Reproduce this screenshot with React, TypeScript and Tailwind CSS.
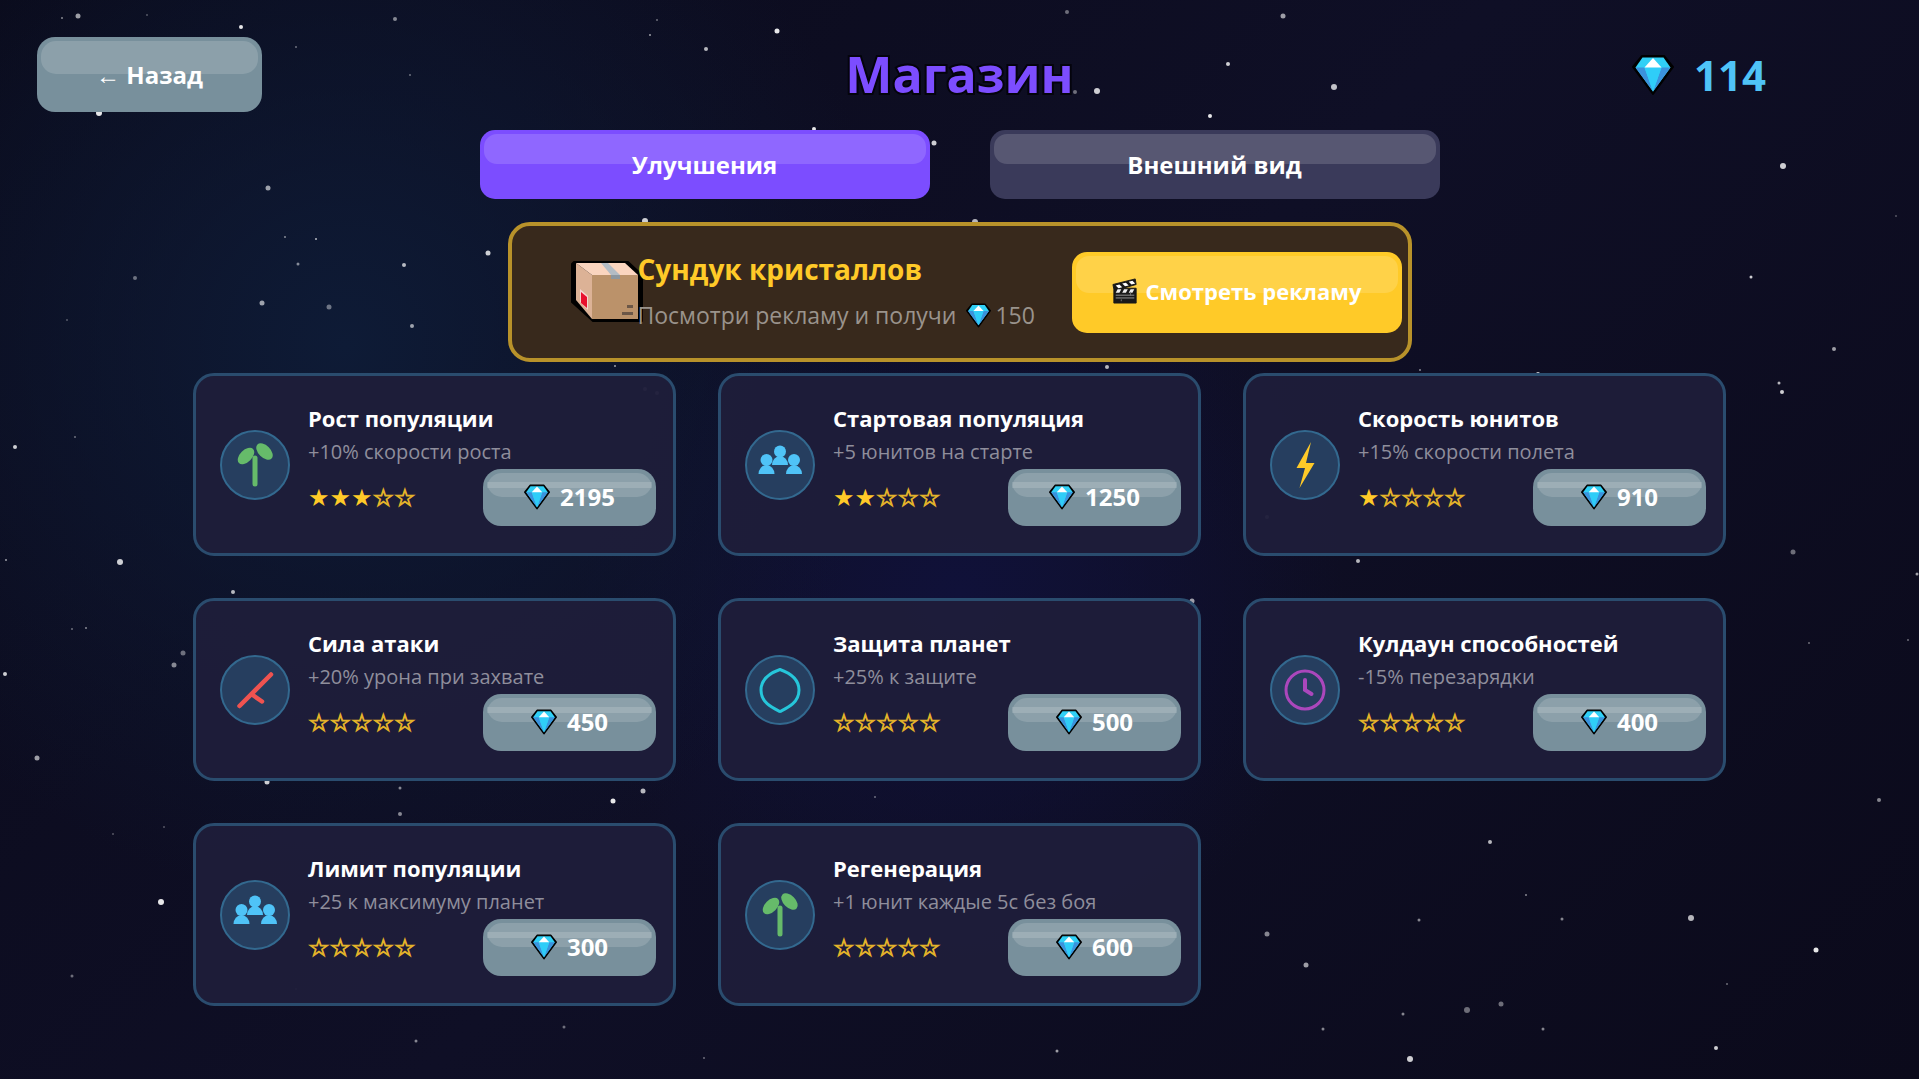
import { useState } from 'react';
import type { ReactNode } from 'react';
import clsx from 'clsx';

type IconName = 'sprout' | 'people' | 'bolt' | 'sword' | 'shield' | 'clock';

interface Upgrade {
  id: string;
  icon: IconName;
  title: string;
  description: string;
  level: number;
  price: number;
}

const MAX_LEVEL = 5;

const upgrades: Upgrade[] = [
  { id: 'growth', icon: 'sprout', title: 'Рост популяции', description: '+10% скорости роста', level: 3, price: 2195 },
  { id: 'start', icon: 'people', title: 'Стартовая популяция', description: '+5 юнитов на старте', level: 2, price: 1250 },
  { id: 'speed', icon: 'bolt', title: 'Скорость юнитов', description: '+15% скорости полета', level: 1, price: 910 },
  { id: 'attack', icon: 'sword', title: 'Сила атаки', description: '+20% урона при захвате', level: 0, price: 450 },
  { id: 'defense', icon: 'shield', title: 'Защита планет', description: '+25% к защите', level: 0, price: 500 },
  { id: 'cooldown', icon: 'clock', title: 'Кулдаун способностей', description: '-15% перезарядки', level: 0, price: 400 },
  { id: 'limit', icon: 'people', title: 'Лимит популяции', description: '+25 к максимуму планет', level: 0, price: 300 },
  { id: 'regen', icon: 'sprout', title: 'Регенерация', description: '+1 юнит каждые 5с без боя', level: 0, price: 600 },
];

const tabs = [
  { id: 'upgrades', label: 'Улучшения' },
  { id: 'skins', label: 'Внешний вид' },
];

// x, y, radius, opacity
const stars: [number, number, number, number][] = [
  [62, 18, 1, 0.5], [78, 16, 2.5, 0.6], [147, 15, 1, 0.3], [241, 27, 2, 0.9], [395, 19, 2, 0.5],
  [296, 47, 1, 0.4], [410, 75, 1, 0.4], [268, 188, 2.5, 0.6], [285, 237, 1, 0.5], [316, 239, 1, 0.7],
  [298, 264, 1.5, 0.5], [404, 265, 2, 0.7], [99, 113, 3, 0.9], [1283, 16, 2.5, 0.6], [1334, 87, 3, 0.75],
  [1228, 64, 2, 0.8], [1210, 116, 2, 0.9], [1097, 91, 3, 0.8], [1075, 92, 2, 0.4], [1107, 367, 2, 0.7],
  [777, 31, 2.5, 0.9], [706, 49, 2, 0.7], [650, 35, 1, 0.6], [657, 20, 1, 0.4], [814, 129, 2, 0.9],
  [934, 143, 2.5, 0.8], [645, 221, 3, 0.8], [975, 222, 3, 0.7], [488, 253, 2.5, 0.8], [615, 366, 1, 0.6],
  [1783, 166, 3, 0.8], [1896, 216, 1, 0.3], [1751, 277, 1.5, 0.8], [1067, 12, 2, 0.4], [1834, 349, 2, 0.6],
  [1779, 383, 1.5, 0.7], [1782, 392, 2, 0.8], [1793, 552, 2.5, 0.4], [1538, 374, 2, 0.8], [1358, 561, 2, 0.7],
  [15, 447, 2, 0.8], [120, 562, 3, 0.8], [6, 560, 1, 0.6], [233, 592, 2, 0.7], [75, 437, 1, 0.4],
  [72, 629, 1, 0.4], [86, 628, 1, 0.5], [174, 665, 2.5, 0.5], [183, 653, 2.5, 0.4], [5, 674, 2, 0.8],
  [37, 758, 2.5, 0.6], [267, 782, 2.5, 0.8], [400, 788, 1.5, 0.5], [400, 814, 2, 0.5], [613, 801, 2.5, 0.9],
  [643, 791, 2.5, 0.7], [161, 902, 3, 0.9], [113, 834, 1, 0.3], [164, 827, 1, 0.3], [72, 976, 1.5, 0.4],
  [416, 1041, 1.5, 0.5], [564, 1027, 1.5, 0.4], [704, 1058, 1, 0.4], [296, 989, 1, 0.3], [1057, 1051, 1.5, 0.6],
  [1267, 934, 2.5, 0.5], [1306, 965, 2.5, 0.6], [1410, 1059, 3, 0.8], [1403, 1014, 1.5, 0.5], [1467, 1010, 3, 0.4],
  [1501, 1004, 2.5, 0.4], [1490, 842, 2, 0.7], [1562, 919, 1.5, 0.5], [1419, 920, 1.5, 0.5], [1691, 918, 3, 0.7],
  [1816, 950, 2.5, 0.9], [1716, 1048, 2, 0.8], [1879, 800, 2, 0.5], [1526, 895, 1, 0.5], [1917, 574, 1.5, 0.6],
  [412, 326, 2, 0.6], [135, 278, 2, 0.4], [262, 303, 2.5, 0.6], [329, 307, 2.5, 0.4], [67, 320, 1, 0.3],
  [1727, 984, 1, 0.4], [645, 389, 2, 0.5], [657, 393, 2, 0.5], [1192, 601, 2.5, 0.6], [1267, 517, 2, 0.5],
  [1323, 1029, 1.5, 0.5], [1543, 1029, 1.5, 0.5], [1809, 643, 1, 0.4], [1908, 640, 1, 0.4], [875, 797, 1, 0.4],
  [1420, 370, 1, 0.5],
];

function Starfield() {
  return (
    <svg
      className="pointer-events-none absolute inset-0 -z-10 h-full w-full"
      viewBox="0 0 1919 1079"
      preserveAspectRatio="xMidYMid slice"
      aria-hidden="true"
    >
      {stars.map(([x, y, r, opacity]) => (
        <circle key={`${x}-${y}`} cx={x} cy={y} r={r} fill="#fff" opacity={opacity} />
      ))}
    </svg>
  );
}

function Gem({ className }: { className?: string }) {
  return (
    <svg viewBox="0 0 42 42" className={clsx('shrink-0', className)} aria-hidden="true">
      <path d="M10 2h22l9 11-20 27L1 13z" fill="#000" stroke="#000" strokeWidth="2" strokeLinejoin="round" />
      <path d="M10.500 3.500h21l7 10-17.500 24L3.500 13.500z" fill="#30d0f6" />
      <path d="M3.500 13.500h9L21 37.500z" fill="#3b92dc" />
      <path d="M38.500 13.500h-9L21 37.500z" fill="#3b92dc" />
      <path d="M12.500 13.500h17L21 37.500z" fill="#2fcdf8" />
      <path d="M21 4l8.500 9.500h-17z" fill="#fff" />
    </svg>
  );
}

function Box() {
  return (
    <svg viewBox="0 0 72 64" className="h-16 w-[72px] shrink-0" aria-hidden="true">
      <path d="M3 2h54l14 13v46H22L1 42V4z" fill="#000" stroke="#000" strokeWidth="2" strokeLinejoin="round" />
      <path d="M5 3l16 12v44L5 40z" fill="#dcb296" />
      <path d="M5 3h49l13 12H21z" fill="#fad5bf" />
      <path d="M21 15h46v44H21z" fill="#bb926a" />
      <path d="M30 3h7l12 12H40z" fill="#b3bcc4" />
      <path d="M40 15h9v4H40z" fill="#8d979f" />
      <path d="M9 29l8 7v14l-8-8z" fill="#f6d5d0" />
      <path d="M10 32l6 5v11l-6-5z" fill="#e8112d" />
      <path d="M56 45h6v3h-6zM51 52h11v3H51z" fill="#6c5747" />
    </svg>
  );
}

function Clapper() {
  return (
    <svg viewBox="0 0 28 28" className="relative size-[26px] shrink-0" aria-hidden="true">
      <path d="M1 7L25 1l1 6-14 4h14v16H2V12z" fill="#191919" stroke="#191919" strokeLinejoin="round" />
      <path d="M4 8l4-1 3 3-4 1zM11 6l4-1 3 3-4 1zM18 4l4-1 3 3-4 1z" fill="#fff" />
      <path d="M6 12h4l-2 4H4zM13 12h4l-2 4h-4zM20 12h4l-2 4h-4z" fill="#eee" />
      <path d="M4 18.500h20M4 21.500h20" stroke="#9a9a9a" strokeWidth="1" />
      <path d="M20 15v4M10 23v2" stroke="#777" strokeWidth="1" />
    </svg>
  );
}

const glyphs: Record<IconName, ReactNode> = {
  sprout: (
    <>
      <path d="M35 28v26" stroke="#66bb6a" strokeWidth="5" strokeLinecap="round" />
      <ellipse cx="26" cy="26" rx="10" ry="6" fill="#66bb6a" transform="rotate(-45 26 26)" />
      <ellipse cx="44.500" cy="21.500" rx="10" ry="6" fill="#66bb6a" transform="rotate(45 44.500 21.500)" />
    </>
  ),
  people: (
    <g fill="#4fc3f7">
      <circle cx="21.500" cy="30" r="6" />
      <path d="M13.500 44a8 9 0 0 1 16 0z" />
      <circle cx="49" cy="30" r="6" />
      <path d="M41 44a8 9 0 0 1 16 0z" />
      <circle cx="35" cy="21.500" r="6" />
      <path d="M27 35a8 9 0 0 1 16 0z" />
    </g>
  ),
  bolt: <path d="M41 12L26.500 38H35L29.500 58 44.500 33H36z" fill="#ffca28" />,
  sword: (
    <g stroke="#ef5350" strokeWidth="4.500" strokeLinecap="round">
      <path d="M51 19.500L19.500 51" />
      <path d="M32 39.500l10 7" />
    </g>
  ),
  shield: (
    <path
      d="M35 14.500c7 2.500 19 7.500 19 20.500s-12 18-19 21.500C28 53 16 48 16 35s12-18 19-20.500z"
      fill="none"
      stroke="#26c6da"
      strokeWidth="3"
      strokeLinejoin="round"
    />
  ),
  clock: (
    <g fill="none" stroke="#ab47bc" strokeLinecap="round">
      <circle cx="35" cy="35" r="19" strokeWidth="3" />
      <path d="M35 25v10l6.500 4" strokeWidth="4" />
    </g>
  ),
};

function UpgradeIcon({ name }: { name: IconName }) {
  return (
    <svg viewBox="0 0 70 70" className="size-[70px] shrink-0" aria-hidden="true">
      <circle cx="35" cy="35" r="34" fill="#263e5f" stroke="#33698f" strokeWidth="2" />
      {glyphs[name]}
    </svg>
  );
}

function Gloss({ className }: { className: string }) {
  return <span className={clsx('absolute inset-x-1 top-1 bg-white/15', className)} />;
}

function UpgradeCard({ upgrade }: { upgrade: Upgrade }) {
  return (
    <article className="flex h-[183px] items-center gap-[18px] rounded-[21px] border-3 border-[#2a4c6e] bg-[#1f1d3a]/95 pr-[17px] pl-6">
      <UpgradeIcon name={upgrade.icon} />
      <div className="min-w-0 flex-1">
        <h2 className="text-[22px] leading-[31px] font-bold whitespace-nowrap text-white">{upgrade.title}</h2>
        <p className="text-[20px] leading-[35px] whitespace-nowrap text-[#8f8e9c]">{upgrade.description}</p>
        <div className="flex items-center justify-between">
          <span
            role="img"
            aria-label={`${upgrade.level} / ${MAX_LEVEL}`}
            className="font-['DejaVu_Sans',sans-serif] text-[24px] leading-none text-[#ffca28]"
          >
            {'★'.repeat(upgrade.level)}
            <span className="text-[#e3b32a] [-webkit-text-stroke:1px_#e3b32a]">
              {'☆'.repeat(MAX_LEVEL - upgrade.level)}
            </span>
          </span>
          <button
            type="button"
            className="relative flex h-[57px] w-[173px] items-center justify-center gap-[10px] rounded-[18px] bg-[#78909c] pb-0.5 text-2xl font-bold text-white"
          >
            <Gloss className="h-[15px] rounded-t-[15px]" />
            <span className="absolute inset-x-1 top-[13px] h-[15px] rounded-b-[15px] bg-white/15" />
            <Gem className="relative size-[26px]" />
            <span className="relative">{upgrade.price}</span>
          </button>
        </div>
      </div>
    </article>
  );
}

export default function App() {
  const [activeTab, setActiveTab] = useState('upgrades');

  return (
    <div className="relative isolate min-h-screen overflow-hidden bg-[#0a0a1a] bg-[radial-gradient(circle_at_18%_32%,#0e1b36_0%,transparent_32%),radial-gradient(circle_at_50%_55%,#101139_0%,transparent_34%),linear-gradient(135deg,#0a0a1a_0%,#0f0f26_50%,#0b0a1b_100%)] pt-[37px] pb-10 font-['Open_Sans','Noto_Sans',sans-serif]">
      <Starfield />

      <header className="grid grid-cols-[1fr_auto_1fr] items-center px-[37px]">
        <button
          type="button"
          className="relative h-[75px] w-[225px] rounded-[18px] bg-[#78909c] text-2xl font-bold text-white"
        >
          <Gloss className="h-[33px] rounded-[15px]" />
          <span className="relative">← Назад</span>
        </button>
        <h1 className="text-[50px] leading-[75px] font-bold text-[#7c4dff] [paint-order:stroke_fill] [-webkit-text-stroke:4px_#04040c]">
          Магазин
        </h1>
        <div className="flex items-center justify-end gap-5 pr-[116px]">
          <Gem className="size-[42px]" />
          <span className="text-[42px] leading-[75px] font-bold text-[#4fc3f7]">114</span>
        </div>
      </header>

      <nav className="mx-auto mt-[18px] grid max-w-[960px] grid-cols-2 gap-[60px]">
        {tabs.map((tab) => (
          <button
            key={tab.id}
            type="button"
            onClick={() => setActiveTab(tab.id)}
            className={clsx(
              'relative h-[69px] rounded-[15px] text-2xl font-bold text-white',
              activeTab === tab.id ? 'bg-[#7c4dff]' : 'bg-[#3a3a5a]'
            )}
          >
            <Gloss className="h-[30px] rounded-[13px]" />
            <span className="relative">{tab.label}</span>
          </button>
        ))}
      </nav>

      <section className="mx-auto mt-[23px] flex h-[140px] max-w-[904px] items-center rounded-[22px] border-4 border-[#b8922a] bg-[#38291c] pr-[6px] pl-[59px]">
        <Box />
        <div className="relative -ml-[5px] flex-1">
          <h2 className="text-[28px] leading-[46px] font-bold whitespace-nowrap text-[#ffca28]">Сундук кристаллов</h2>
          <p className="flex items-center text-[23px] leading-[46px] whitespace-nowrap text-[#9a938c]">
            Посмотри рекламу и получи
            <Gem className="mr-1 ml-[10px] size-[25px]" />
            150
          </p>
        </div>
        <button
          type="button"
          className="relative flex h-[81px] w-[330px] items-center justify-center gap-2 rounded-[15px] bg-[#ffca28] pb-0.5 text-[22px] font-bold text-white"
        >
          <Gloss className="h-[37px] rounded-[13px]" />
          <Clapper />
          <span className="relative">Смотреть рекламу</span>
        </button>
      </section>

      <main className="mx-auto mt-[11px] grid max-w-[1533px] grid-cols-3 gap-[42px]">
        {upgrades.map((upgrade) => (
          <UpgradeCard key={upgrade.id} upgrade={upgrade} />
        ))}
      </main>
    </div>
  );
}
